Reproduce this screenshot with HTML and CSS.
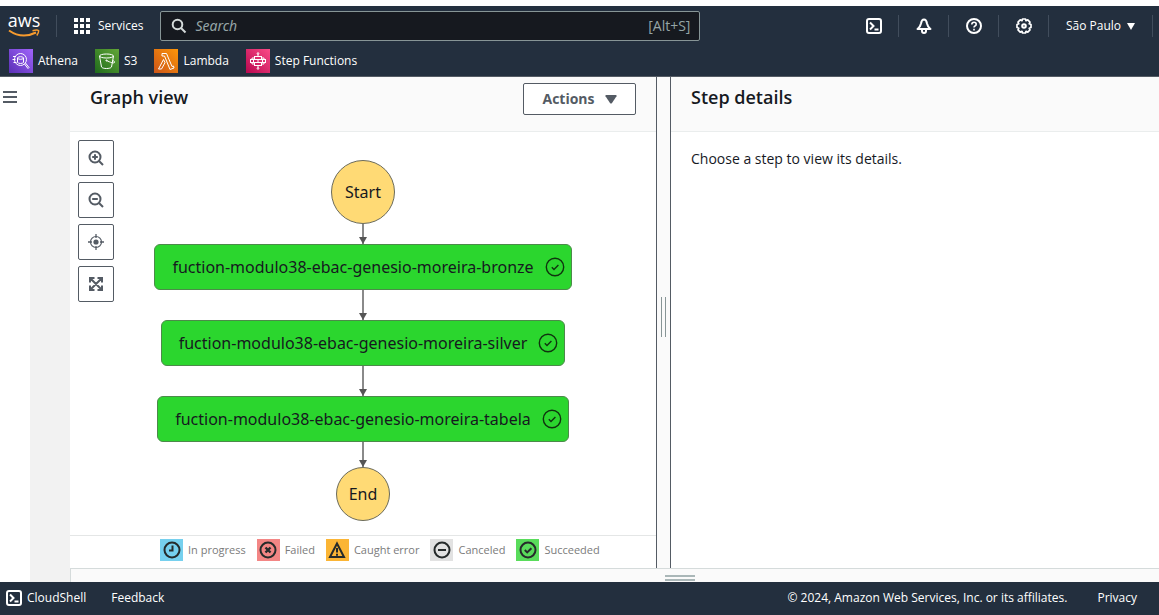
FILE: index.html
```html
<!DOCTYPE html>
<html lang="en">
<head>
<meta charset="utf-8">
<title>Step Functions</title>
<link rel="stylesheet" href="styles.css">
</head>
<body>
<svg class="defs" aria-hidden="true">
  <symbol id="check" viewBox="0 0 20 20"><circle cx="10" cy="10" r="8.7"/><path d="M6.800 10.200l2.200 2.200 4.400-4.400"/></symbol>
  <symbol id="shell" viewBox="0 0 16 16"><rect x="1" y="1" width="14" height="14" rx="2"/><path d="M4 4.500L7.500 8 4 11.500M8.500 11.500h4"/></symbol>
</svg>

<header class="topbar">
  <div class="topbar-main">
    <a class="logo" href="#" aria-label="AWS home">
      <span class="logo-text">aws</span>
      <svg class="logo-smile" viewBox="0 0 32 9"><path d="M1 1.500Q14 10.500 28 3.500" fill="none" stroke="#f79b2e" stroke-width="2"/><path d="M24.500 1.800Q29 .3 30.500 1.500Q31 3.500 28.800 6.500" fill="none" stroke="#f79b2e" stroke-width="1.500"/></svg>
    </a>
    <span class="rule"></span>
    <button class="services" type="button">
      <svg width="16" height="16" viewBox="0 0 16 16" fill="#fff"><path d="M0 0h4v4H0zM6 0h4v4H6zM12 0h4v4h-4zM0 6h4v4H0zM6 6h4v4H6zM12 6h4v4h-4zM0 12h4v4H0zM6 12h4v4H6zM12 12h4v4h-4z"/></svg>
      Services
    </button>
    <label class="search">
      <svg width="16" height="16" viewBox="0 0 16 16" fill="none" stroke="#d5dbdb" stroke-width="2"><circle cx="6.500" cy="6.500" r="4.800"/><path d="M10 10l4.500 4.500"/></svg>
      <input type="text" placeholder="Search" aria-label="Search">
      <span class="hint">[Alt+S]</span>
    </label>
    <nav class="tools">
      <button type="button" aria-label="CloudShell"><svg class="line" width="16" height="16"><use href="#shell"/></svg></button>
      <button type="button" aria-label="Notifications"><svg class="line" width="16" height="16" viewBox="0 0 16 16"><path d="M1.500 11C4 9.500 4.500 8 5 5.500 5.400 3 6.500 1.500 8 1.500s2.600 1.500 3 4c.5 2.500 1 4 3.500 5.500z" stroke-linejoin="round"/><path d="M6 11.500V13q0 2 2 2t2-2v-1.500"/></svg></button>
      <button type="button" aria-label="Help"><svg class="line" width="16" height="16" viewBox="0 0 16 16"><circle cx="8" cy="8" r="7"/><path d="M5.800 6.500Q5.800 4.200 8 4.200t2.200 2q0 1.200-1.200 1.800-1 .5-1 1.500M8 10.800v1.700" stroke-width="1.600"/></svg></button>
      <button type="button" aria-label="Settings"><svg class="line" width="16" height="16" viewBox="0 0 16 16"><path d="M6.500 1h3l.5 1.700 1.800-.8 2.200 2.200-.8 1.700 1.800.7v3l-1.800.7.8 1.700-2.200 2.200-1.800-.8-.5 1.700h-3L6 13.300l-1.800.8L2 11.900l.8-1.700L1 9.500v-3l1.800-.7L2 4.100l2.200-2.200 1.800.8z" stroke-linejoin="round" stroke-width="1.700"/><circle cx="8" cy="8" r="1.800"/></svg></button>
      <button class="region" type="button">São Paulo <svg width="8" height="7" viewBox="0 0 8 7" fill="#fff"><path d="M0 0h8L4 7z"/></svg></button>
    </nav>
  </div>
  <nav class="favorites">
    <a href="#"><svg class="tile athena" viewBox="0 0 24 24"><circle cx="11.500" cy="10.500" r="6"/><path d="M15.500 15l3.500 4.500 1-1-3.500-4.500M8.500 9v4.500c1 1.300 5 1.300 6 0V9M4 7.500h3M3.500 10.500h3M4.500 13.500h3"/><ellipse cx="11.500" cy="9" rx="3" ry="1.300"/></svg>Athena</a>
    <a href="#"><svg class="tile s3" viewBox="0 0 24 24"><ellipse cx="11.500" cy="7" rx="7" ry="2"/><path d="M4.500 7l2 11c1 2 9 2 10 0l2-11M11.500 11.500c4 2 7.500 3 8 2s-1-1.700-2-2.200"/><circle cx="11.500" cy="11.500" r=".6"/></svg>S3</a>
    <a href="#"><svg class="tile lambda" viewBox="0 0 24 24"><path d="M8 4.500h4.500L18 17.500l1.500-.5.500 2-4 1.500L10.500 7H8zM9.500 10.500l1.500 3.200L7.500 20H4.500z"/></svg>Lambda</a>
    <a href="#"><svg class="tile stepfn" viewBox="0 0 24 24"><rect x="8.500" y="7.500" width="7" height="3"/><rect x="8.500" y="13.500" width="7" height="3"/><rect x="4.500" y="10.500" width="3" height="3"/><rect x="16.500" y="10.500" width="3" height="3"/><path d="M12 5v2.500M12 10.500v3M12 16.500V19M8.500 9H6v1.500M15.500 9H18v1.500M8.500 15H6v-1.500M15.500 15H18v-1.500"/><circle cx="12" cy="4.500" r=".8"/><circle cx="12" cy="19.500" r=".8"/></svg>Step Functions</a>
  </nav>
</header>

<div class="workspace">
  <aside class="side">
    <button type="button" aria-label="Open navigation"><svg width="14" height="12" viewBox="0 0 14 12"><path d="M0 1h14M0 6h14M0 11h14" stroke="#545b64" stroke-width="2"/></svg></button>
  </aside>
  <main class="content">
    <div class="panes">
      <section class="graph-pane">
        <div class="pane-head">
          <h2>Graph view</h2>
          <button class="actions" type="button">Actions <svg width="12" height="9" viewBox="0 0 12 9" fill="#545b64"><path d="M1 0h10q1 .3.5 1.200L7 8q-1 1-2 0L.5 1.200Q0 .3 1 0z"/></svg></button>
        </div>
        <div class="canvas">
          <div class="zoom-tools">
            <button type="button" aria-label="Zoom in"><svg viewBox="0 0 16 16"><circle cx="7" cy="7" r="5.500"/><path d="M11 11l4 4M7 4.200v5.600M4.200 7h5.600"/></svg></button>
            <button type="button" aria-label="Zoom out"><svg viewBox="0 0 16 16"><circle cx="7" cy="7" r="5.500"/><path d="M11 11l4 4M4.200 7h5.600"/></svg></button>
            <button type="button" aria-label="Center"><svg viewBox="0 0 16 16"><circle cx="8" cy="8" r="5.500" stroke-width="1.200"/><circle cx="8" cy="8" r="2.600" fill="#545b64" stroke="none"/><path d="M8 0v4M8 12v4M0 8h4M12 8h4" stroke-width="1.300"/></svg></button>
            <button type="button" aria-label="Fit"><svg viewBox="0 0 16 16"><path d="M2 6.500V2h4.500M9.500 2H14v4.500M14 9.500V14H9.500M6.500 14H2V9.500M2.500 2.500l11 11M13.500 2.500l-11 11"/></svg></button>
          </div>
          <div class="flow">
            <div class="terminal start">Start</div>
            <div class="arrow short"></div>
            <div class="step">fuction-modulo38-ebac-genesio-moreira-bronze<svg><use href="#check"/></svg></div>
            <div class="arrow"></div>
            <div class="step">fuction-modulo38-ebac-genesio-moreira-silver<svg><use href="#check"/></svg></div>
            <div class="arrow"></div>
            <div class="step">fuction-modulo38-ebac-genesio-moreira-tabela<svg><use href="#check"/></svg></div>
            <div class="arrow last"></div>
            <div class="terminal end">End</div>
          </div>
        </div>
        <ul class="legend">
          <li><span class="chip progress"><svg viewBox="0 0 18 18"><circle cx="9" cy="9" r="7.500"/><path d="M9.500 4.500v5H6"/></svg></span>In progress</li>
          <li><span class="chip failed"><svg viewBox="0 0 18 18"><circle cx="9" cy="9" r="7.500"/><path d="M6.500 6.500l5 5M11.500 6.500l-5 5" stroke-width="2.400"/></svg></span>Failed</li>
          <li><span class="chip caught"><svg viewBox="0 0 18 18"><path d="M9 2.500L16 16H2zM9 7v4.500M9 12.700v2"/></svg></span>Caught error</li>
          <li><span class="chip canceled"><svg viewBox="0 0 18 18"><circle cx="9" cy="9" r="7.500"/><path d="M5 9h8"/></svg></span>Canceled</li>
          <li><span class="chip succeeded"><svg viewBox="0 0 18 18"><circle cx="9" cy="9" r="7.500"/><path d="M5.800 9l2.400 2.400 4.200-4.200"/></svg></span>Succeeded</li>
        </ul>
      </section>
      <div class="divider" role="separator"><span></span></div>
      <section class="details-pane">
        <div class="pane-head"><h2>Step details</h2></div>
        <p>Choose a step to view its details.</p>
      </section>
    </div>
    <div class="drawer"><span></span></div>
  </main>
</div>

<footer class="footer">
  <a class="cloudshell" href="#"><svg class="line" width="16" height="16"><use href="#shell"/></svg>CloudShell</a>
  <a class="feedback" href="#">Feedback</a>
  <span class="copyright">© 2024, Amazon Web Services, Inc. or its affiliates.</span>
  <a href="#">Privacy</a>
</footer>
</body>
</html>
```

FILE: styles.css
```css
* { box-sizing: border-box; }
body {
  margin: 0;
  min-height: 100vh;
  display: flex;
  flex-direction: column;
  padding-top: 6px;
  background: #fff;
  color: #16191f;
  font: 14px/20px "Open Sans", "Noto Sans", sans-serif;
}
button { font: inherit; color: inherit; background: none; border: 0; padding: 0; cursor: pointer; }
a { color: inherit; text-decoration: none; }
h2, p, ul { margin: 0; padding: 0; }
svg { display: block; flex: none; }
.defs { position: absolute; width: 0; height: 0; }
.line { fill: none; stroke: #fff; stroke-width: 2; }

.topbar { background: #232f3e; color: #fff; font-size: 12px; font-weight: 500; border-bottom: 1px solid #545b64; }
.topbar-main { display: flex; align-items: center; height: 40px; }
.logo { width: 32px; margin-left: 8px; display: flex; flex-direction: column; }
.logo-text { font: 500 18px/18px "Open Sans", sans-serif; height: 15px; display: flex; align-items: flex-end; justify-content: center; }
.logo-smile { width: 32px; height: 9px; }
.rule { width: 1px; height: 22px; margin: 0 17px 0 16px; background: #414d5c; }
.services { display: flex; align-items: center; gap: 8px; }
.search {
  display: flex; align-items: center; gap: 8px;
  width: 540px; height: 30px; margin-left: 17px; padding: 0 9px 0 10px;
  background: #16191f; border: 1px solid #879596; border-radius: 2px;
}
.search input { flex: 1; min-width: 0; border: 0; padding: 0; outline: 0; background: none; color: #fff; font: 14px/20px "Noto Sans", sans-serif; }
.search input::placeholder { color: #95a5a6; font-style: italic; opacity: 1; }
.hint { color: #95a5a6; font-size: 14px; font-weight: 400; }
.tools { display: flex; align-items: center; margin-left: auto; }
.tools button { display: flex; align-items: center; justify-content: center; gap: 6px; width: 50px; height: 22px; border-right: 1px solid #414d5c; }
.tools .region { width: 104px; margin-right: 6px; }

.favorites { display: flex; height: 30px; align-items: center; padding-left: 9px; gap: 17px; }
.favorites a { display: flex; align-items: center; gap: 5px; }
.tile { width: 24px; height: 24px; fill: none; stroke: #fff; stroke-width: 1; }
.athena { background: linear-gradient(45deg, #5a30b5, #a064fb); }
.s3 { background: linear-gradient(45deg, #1f6b1c, #62a637); }
.lambda { background: linear-gradient(45deg, #cc5519, #fd9608); }
.stepfn { background: linear-gradient(45deg, #b8084f, #fb4a87); }

.workspace { flex: 1; display: flex; background: #f2f2f2; }
.side { width: 30px; background: #fff; padding: 14px 0 0 3px; }
.side button { display: block; }
.content { flex: 1; margin-left: 40px; display: flex; flex-direction: column; min-width: 0; }
.panes { flex: 1; display: flex; background: #fff; }
.graph-pane { flex: 586 1 0; display: flex; flex-direction: column; min-width: 0; }
.details-pane { flex: 488 1 0; min-width: 0; }
.pane-head { height: 55px; display: flex; align-items: flex-start; justify-content: space-between; padding: 6px 20px 0; background: #fafafa; border-bottom: 1px solid #eaeded; }
.pane-head h2 { font-size: 18px; line-height: 28px; font-weight: 600; }
.actions {
  display: flex; align-items: center; justify-content: center; gap: 10px;
  width: 113px; height: 32px; background: #fff; color: #545b64;
  border: 1px solid #545b64; border-radius: 2px; font-size: 14px; font-weight: 700;
}
.details-pane p { padding: 17px 20px; }
.divider { width: 15px; display: flex; align-items: center; justify-content: center; padding-bottom: 12px; background: #fafafa; border: solid #545b64; border-width: 0 1px; }
.divider span { width: 5px; height: 40px; border: solid #879596; border-width: 0 1px; }

.canvas { position: relative; flex: 1; padding-top: 28px; }
.zoom-tools { position: absolute; left: 8px; top: 8px; display: flex; flex-direction: column; gap: 6px; }
.zoom-tools button { width: 36px; height: 36px; display: flex; align-items: center; justify-content: center; background: #fff; border: 1px solid #545b64; border-radius: 2px; }
.zoom-tools svg { width: 16px; height: 16px; fill: none; stroke: #545b64; stroke-width: 2; }
.flow { display: flex; flex-direction: column; align-items: center; font: 16px/24px "Noto Sans", sans-serif; }
.terminal { display: flex; align-items: center; justify-content: center; background: #ffda75; border: 1px solid #6b6b5b; border-radius: 50%; }
.start { width: 64px; height: 64px; }
.end { width: 54px; height: 54px; }
.step { display: flex; align-items: center; gap: 11px; height: 46px; padding: 0 6px 0 17px; background: #2bd62e; border: 1px solid #4c8a4a; border-radius: 6px; white-space: nowrap; }
.step svg { width: 20px; height: 20px; fill: none; stroke: #10330f; stroke-width: 1.4; }
.arrow { position: relative; width: 2px; height: 30px; background: #8a8a8a; }
.arrow::after { content: ""; position: absolute; left: -3px; bottom: 0; border: solid transparent; border-width: 7px 4px 0; border-top-color: #555; }
.short { height: 20px; }
.last { height: 25px; }

.legend { display: flex; align-items: center; gap: 11px; height: 33px; padding: 0 20px 4px 90px; border-top: 1px solid #e4e6e6; list-style: none; font-size: 11px; color: #7b7b7b; white-space: nowrap; }
.legend li { display: flex; align-items: center; gap: 5px; }
.chip { width: 23px; height: 22px; display: flex; align-items: center; justify-content: center; }
.chip svg { width: 18px; height: 18px; fill: none; stroke: #262b2b; stroke-width: 2; }
.progress { background: #76d0ee; }
.failed { background: #f38685; }
.caught { background: #fbb535; }
.canceled { background: #e2e2e2; }
.succeeded { background: #59dc5b; }

.drawer { height: 14px; display: flex; align-items: flex-end; justify-content: center; padding: 0 0 1px 130px; background: #fafafa; border: solid #d5dbdb; border-width: 1px 0 0 1px; }
.drawer span { width: 30px; height: 6px; border: solid #aab7b8; border-width: 2px 0; }

.footer { display: flex; align-items: center; height: 33px; padding: 0 22px 2px 6px; background: #232f3e; color: #fff; font-size: 12px; font-weight: 500; }
.cloudshell { display: flex; align-items: center; gap: 5px; }
.feedback { margin-left: 25px; }
.copyright { margin: 0 30px 0 auto; }
```
